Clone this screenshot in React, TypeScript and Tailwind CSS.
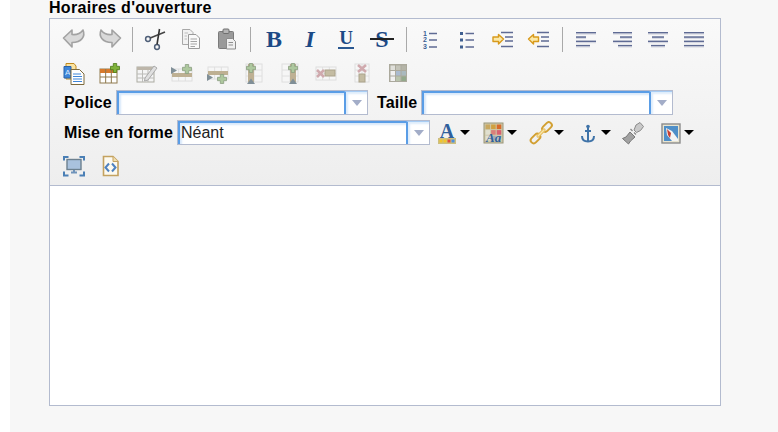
import React from "react";

const serif = { fontFamily: "'Liberation Serif', serif" };

function Svg({ children, w = 24, h = 24, className = "" }: { children: React.ReactNode; w?: number; h?: number; className?: string }) {
  return (
    <svg width={w} height={h} viewBox={`0 0 ${w} ${h}`} className={`block ${className}`}>
      {children}
    </svg>
  );
}

function Btn({ children, w = "w-9" }: { children: React.ReactNode; w?: string }) {
  return <div className={`${w} h-[34px] flex items-center justify-center shrink-0`}>{children}</div>;
}

function Sep({ w = "w-[10px]" }: { w?: string }) {
  return (
    <div className={`${w} h-[34px] flex items-center justify-center shrink-0`}>
      <div className="w-px h-[25px] bg-[#a9a9a9]" />
    </div>
  );
}

const Undo = ({ flip = false }: { flip?: boolean }) => (
  <Svg>
    <path
      transform={flip ? "matrix(-1 0 0 1 24 0)" : undefined}
      d="M1.5 11 L10 3 V7.5 C14 8 18 7 21 3 C23.5 9 20 15.5 10 15.5 V20 Z"
      fill="#d9d9d9"
      stroke="#a2a2a2"
      strokeWidth="1.6"
      strokeLinejoin="round"
    />
  </Svg>
);

const Cut = () => (
  <Svg>
    <g fill="none" stroke="#4f5f78" strokeWidth="1.5">
      <circle cx="5" cy="12" r="2.4" />
      <circle cx="14" cy="20" r="2.4" />
    </g>
    <path d="M7.2 11 L22 5" stroke="#444" strokeWidth="1.5" />
    <path d="M14 17.5 L16.5 2" stroke="#333" strokeWidth="1.6" />
  </Svg>
);

const Copy = () => (
  <Svg>
    <path d="M3.5 2.5 H11 L14 5.5 V17.5 H3.5 Z" fill="#f2f2f2" stroke="#a8a8a8" />
    <path d="M9.5 7.5 H17 L20.5 11 V21.5 H9.5 Z" fill="#fafafa" stroke="#9a9a9a" />
    <path d="M11.5 12 H18 M11.5 14.5 H18 M11.5 17 H18 M11.5 19.5 H16" stroke="#a5a5a5" />
    <path d="M5.5 6 H9 M5.5 9 H8 M5.5 12 H8" stroke="#bcbcbc" />
  </Svg>
);

const Paste = () => (
  <Svg>
    <rect x="3.5" y="4.5" width="15" height="17" rx="1" fill="#9a9a9a" stroke="#7b7b7b" />
    <rect x="8" y="2" width="6" height="4.5" rx="1" fill="#b5b5b5" stroke="#6f6f6f" />
    <path d="M11.5 11.5 H17.5 L20.5 14.5 V22 H11.5 Z" fill="#f0f0f0" stroke="#8c8c8c" />
    <path d="M13.5 15.5 H18 M13.5 18 H18" stroke="#8f8f8f" />
  </Svg>
);

function Letter({ children, italic = false, underline = false, strike = false, small = false }: { children: string; italic?: boolean; underline?: boolean; strike?: boolean; small?: boolean }) {
  return (
    <div className="relative w-6 h-6 flex items-center justify-center">
      <span
        style={serif}
        className={`text-[#1c4a86] font-bold leading-none ${italic ? "italic" : ""} ${small ? "text-[19px] -mt-[3px]" : "text-[24px]"}`}
      >
        {children}
      </span>
      {underline && <div className="absolute left-[4px] right-[4px] bottom-[2px] h-[2px] bg-[#2a5790]" />}
      {strike && <div className="absolute left-0 right-0 top-[11px] h-[2px] bg-[#222]" />}
    </div>
  );
}

const OL = () => (
  <Svg>
    <g fill="#3c5f95" fontSize="7" fontWeight="700" fontFamily="'Liberation Sans', sans-serif">
      <text x="4" y="9">1</text>
      <text x="4" y="15">2</text>
      <text x="4" y="22">3</text>
    </g>
    <path d="M10 6.5 H18 M10 13 H18 M10 20 H18" stroke="#5f6b94" strokeWidth="1.5" />
  </Svg>
);

const UL = () => (
  <Svg>
    <path d="M5 5 h3 v3 h-3 Z M5 11.5 h3 v3 h-3 Z M5 18.5 h3 v3 h-3 Z" fill="#3f5f90" />
    <path d="M10.5 6.5 H19 M10.5 13 H19 M10.5 20 H19" stroke="#5f6b94" strokeWidth="1.5" />
  </Svg>
);

const Indent = ({ out = false }: { out?: boolean }) => (
  <Svg>
    <path d="M10 5.5 H22 M14 10 H22 M14 14 H22 M10 19.5 H22" stroke="#5f6b94" strokeWidth="1.5" />
    <path
      d={out ? "M1.5 12 L6.5 7.5 V10 H11.5 V14.5 H6.5 V17 Z" : "M12.5 12 L7.5 7.5 V10 H2 V14.5 H7.5 V17 Z"}
      fill="#fbe9a8"
      stroke="#d89a1c"
      strokeWidth="1.4"
      strokeLinejoin="round"
    />
  </Svg>
);

const Align = ({ rows }: { rows: [number, number][] }) => (
  <Svg>
    {rows.map(([x, w], i) => (
      <g key={i}>
        <rect x={x} y={5 + i * 4.3} width={w} height="1.6" fill="#5f6b94" />
        <rect x={x} y={6.6 + i * 4.3} width={w} height="1" fill="#d4d6e0" />
      </g>
    ))}
  </Svg>
);

const Paste2 = () => (
  <Svg>
    <path d="M4 2.5 H12 L14 5 V18 H4 Z" fill="#fbe3a0" stroke="#c08a20" />
    <path d="M2 5.5 H9 V17 H2 Z" fill="#3f86d8" stroke="#2a62a8" />
    <text x="3" y="14" fill="#dbe9fb" fontSize="8" fontFamily="'Liberation Sans', sans-serif">A</text>
    <path d="M9 8.5 H17.5 L22 13 V23.5 H9 Z" fill="#fff" stroke="#7d6a3c" />
    <path d="M11 13 H19 M11 15.5 H20 M11 18 H20 M11 20.5 H20" stroke="#3f86d8" />
  </Svg>
);

const TableBase = ({ x = 2, y = 8, w = 17, h = 14, stroke = "#8f7a4f", head = "#d77a2c" }: { x?: number; y?: number; w?: number; h?: number; stroke?: string; head?: string }) => (
  <g>
    <rect x={x} y={y} width={w} height={h} fill="#fff" stroke={stroke} />
    <rect x={x} y={y} width={w} height={4} fill={head} />
    <path d={`M${x + w / 3} ${y} V${y + h} M${x + (2 * w) / 3} ${y} V${y + h} M${x} ${y + h / 2 + 1} H${x + w}`} stroke={stroke} />
  </g>
);

const Plus = ({ x, y, c = "#7fb23a", s = "#4c7a18" }: { x: number; y: number; c?: string; s?: string }) => (
  <path
    d={`M${x - 1.7} ${y - 4.5} h3.4 v2.8 h2.8 v3.4 h-2.8 v2.8 h-3.4 v-2.8 h-2.8 v-3.4 h2.8 Z`}
    fill={c}
    stroke={s}
    strokeWidth="0.8"
  />
);

const TableAdd = () => (
  <Svg>
    <TableBase />
    <Plus x={17} y={7} />
  </Svg>
);

const Dim = ({ children }: { children: React.ReactNode }) => <Svg className="opacity-70">{children}</Svg>;

const Grid = ({ x, y, w, h, cx = 3, cy = 2 }: { x: number; y: number; w: number; h: number; cx?: number; cy?: number }) => (
  <g>
    <rect x={x} y={y} width={w} height={h} fill="#f7f7f7" stroke="#d6d6d6" />
    {Array.from({ length: cx - 1 }).map((_, i) => (
      <path key={i} d={`M${x + ((i + 1) * w) / cx} ${y} V${y + h}`} stroke="#d6d6d6" />
    ))}
    {Array.from({ length: cy - 1 }).map((_, i) => (
      <path key={i} d={`M${x} ${y + ((i + 1) * h) / cy} H${x + w}`} stroke="#d6d6d6" />
    ))}
  </g>
);

const TEdit = () => (
  <Dim>
    <rect x="3" y="6" width="17" height="15" fill="#f5f5f5" stroke="#8d8d80" />
    <rect x="3" y="6" width="17" height="3" fill="#a59c8a" />
    <path d="M8.5 9 V21 M14 9 V21 M3 13 H20 M3 17 H20" stroke="#a5a5a0" />
    <path d="M11 17 L20 5 L23 7 L14 19 L10.5 20 Z" fill="#d8d8d8" stroke="#8a8a8a" />
  </Dim>
);

const ColBefore = () => (
  <Dim>
    <Grid x={2} y={8} w={20} h={12} />
    <rect x="2" y="12" width="20" height="4" fill="#a8946a" />
    <path d="M1 6 L7 9.5 L1 13 Z" fill="#4f6470" />
    <Plus x={17} y={8} c="#8fb57a" s="#5f7a50" />
  </Dim>
);

const ColAfter = () => (
  <Dim>
    <Grid x={2} y={6} w={20} h={12} />
    <rect x="2" y="10" width="20" height="4" fill="#a8946a" />
    <path d="M1 13 L7 16.5 L1 20 Z" fill="#4f6470" />
    <Plus x={16} y={18} c="#8fb57a" s="#5f7a50" />
  </Dim>
);

const RowAdd = ({ shift = 0 }: { shift?: number }) => (
  <Dim>
    <Grid x={4} y={3} w={16} h={18} cx={2} cy={3} />
    <rect x={6 + shift} y="3" width="6" height="18" fill="#a8946a" />
    <Plus x={9 + shift} y={7} c="#8fb57a" s="#5f7a50" />
    <path d={`M${5 + shift} 23 L${9 + shift} 17.5 L${13 + shift} 23 Z`} fill="#4f6470" />
  </Dim>
);

const DelRow = () => (
  <Dim>
    <Grid x={2} y={6} w={20} h={13} cx={3} cy={2} />
    <rect x="11" y="9" width="10" height="6" fill="#b0a480" stroke="#8d8160" />
    <path d="M3 9 L10 16 M10 9 L3 16" stroke="#c08a90" strokeWidth="2.6" />
  </Dim>
);

const DelCol = () => (
  <Dim>
    <Grid x={5} y={3} w={14} h={18} cx={2} cy={3} />
    <rect x="9" y="13" width="6" height="8" fill="#b0a480" stroke="#8d8160" />
    <path d="M8 4 L16 11 M16 4 L8 11" stroke="#c08a90" strokeWidth="2.6" />
  </Dim>
);

const Cells = () => (
  <Dim>
    <rect x="3" y="3" width="18" height="18" fill="#8d8a78" />
    {["#d8d8d0", "#b0b0a0", "#9a9a88", "#f0f0f0", "#8ba3c0", "#8aa0a8", "#f0f0f0", "#a0b090", "#6a8a60"].map((c, i) => (
      <rect key={i} x={4.5 + (i % 3) * 5.5} y={4.5 + Math.floor(i / 3) * 5.5} width="4.5" height="4.5" fill={c} />
    ))}
  </Dim>
);

function Combo({ value = "", w }: { value?: string; w: string }) {
  return (
    <div className={`${w} h-[25px] border border-[#b3bbcf] flex bg-white shrink-0`}>
      <div className="flex-1 min-w-0 border-l-2 border-t-2 border-l-[#5a9de6] border-t-[#5a9de6] shadow-[inset_2px_2px_2px_#d8e8fa] text-[16px] leading-[19px] text-[#222] pl-[1px] font-['Liberation_Sans',sans-serif] overflow-hidden">
        {value}
      </div>
      <div className="w-[23px] shrink-0 border-l-2 border-t border-l-[#5a9de6] border-t-[#a8cdf4] shadow-[inset_2px_2px_2px_#deecfb] flex items-center justify-center">
        <div className="w-0 h-0 border-l-[5px] border-r-[5px] border-t-[6px] border-l-transparent border-r-transparent border-t-[#a3adc8]" />
      </div>
    </div>
  );
}

const Caret = () => <div className="w-0 h-0 border-l-[5px] border-r-[5px] border-t-[5px] border-l-transparent border-r-transparent border-t-black" />;

const TextColor = () => (
  <Svg>
    <text x="12" y="17" textAnchor="middle" fill="#2f5f9c" fontSize="20" fontWeight="700" fontFamily="'Liberation Serif', serif">A</text>
    <rect x="3" y="17" width="18" height="6" fill="#cdbf80" />
    <rect x="4.5" y="18.5" width="3" height="3" fill="#f3c52a" />
    <rect x="8.5" y="18.5" width="3" height="3" fill="#f3c52a" />
    <rect x="12.5" y="18.5" width="3" height="3" fill="#e0503a" />
    <rect x="16.5" y="18.5" width="3" height="3" fill="#4c8fe0" />
  </Svg>
);

const BgColor = () => (
  <Svg>
    <rect x="2" y="2" width="19" height="20" fill="#cfc9aa" stroke="#9a9578" />
    {["#c9a860", "#d0a040", "#d86a2a", "#e0e0d0", "#d8807a", "#d86070", "#e0e0d0", "#a0a8b8", "#c0c0c0"].map((c, i) => (
      <rect key={i} x={3.5 + (i % 3) * 5.6} y={3.5 + Math.floor(i / 3) * 5.6} width="4.6" height="4.6" fill={c} />
    ))}
    <text x="4" y="21" fill="#2f5f9c" fontSize="13" fontWeight="700" fontStyle="italic" fontFamily="'Liberation Serif', serif">Aa</text>
  </Svg>
);

const LinkIcon = () => (
  <Svg>
    <g fill="none" stroke="#d2a032" strokeWidth="2">
      <rect x="-3" y="-5.5" width="6" height="11" rx="3" transform="translate(6.5,17.5) rotate(45)" />
      <rect x="-3" y="-5.5" width="6" height="11" rx="3" transform="translate(18,6) rotate(45)" />
    </g>
    <path d="M9 15 L15 9" stroke="#e6bc5a" strokeWidth="3.2" strokeLinecap="round" />
    <path d="M9 15 L15 9" stroke="#f8e6a8" strokeWidth="1.2" strokeLinecap="round" />
  </Svg>
);

const Anchor = () => (
  <Svg>
    <g fill="none" stroke="#3f73a8" strokeWidth="2">
      <path d="M12 7 V20" />
      <path d="M9 10 H15" />
      <path d="M6 15 C6 19 9 20.5 12 20.5 C15 20.5 18 19 18 15" />
    </g>
    <circle cx="12" cy="5.5" r="1.8" fill="#3f73a8" />
  </Svg>
);

const Unlink = () => (
  <Svg>
    <path d="M1.5 17.5 L5 16 L9 11 L14 16 L9.5 20 L7.5 23 Z" fill="#a2a2a2" stroke="#777" />
    <path d="M13 9 L15 4 L19 1.5 L22.5 5.5 L19.5 9.5 L15.5 11.5 Z" fill="#c9c9c9" stroke="#8a8a8a" />
    <path d="M9.5 8 L11.5 10 M13 11.5 L15 13.5" stroke="#8a8a8a" strokeWidth="1.3" />
  </Svg>
);

const ImageIcon = () => (
  <Svg>
    <rect x="3" y="3" width="18" height="19" fill="#e8e4d0" stroke="#8c8c8c" strokeWidth="1.4" />
    <rect x="5" y="5" width="14" height="15" fill="#4f8fc8" />
    <path d="M7 7 L13 10 L19 18 V20 H13 L8 14 Z" fill="#f4f4f4" />
    <path d="M8 8 L12 12 L11 17 L9 14 Z" fill="#c84032" />
  </Svg>
);

const Fullscreen = () => (
  <Svg>
    <path d="M2 6.5 V3 H6.5 M17.5 3 H22 V6.5 M22 17.5 V21.5 H17.5 M6.5 21.5 H2 V17.5" fill="none" stroke="#4a7fb5" strokeWidth="2" />
    <rect x="5" y="5.5" width="14" height="10" fill="#a9c2de" stroke="#6d8190" strokeWidth="1.4" />
    <path d="M9 18.5 H15 M12 16 V18.5" stroke="#6f93ba" strokeWidth="2" />
  </Svg>
);

const Source = () => (
  <Svg>
    <path d="M5.5 2.5 H15 L20 7.5 V21.5 H5.5 Z" fill="#fdfaf0" stroke="#c4a260" strokeWidth="1.6" />
    <path d="M15 2.5 V7.5 H20" fill="#f2dfb0" stroke="#c4a260" />
    <path d="M11 9.5 L7.5 13.5 L11 17.5 M14 9.5 L17.5 13.5 L14 17.5" fill="none" stroke="#4f82c0" strokeWidth="2" />
  </Svg>
);

const Label = ({ children, className = "" }: { children: string; className?: string }) => (
  <span className={`text-[16px] font-bold tracking-[0.1px] text-black whitespace-nowrap shrink-0 ${className}`}>{children}</span>
);

export default function App() {
  return (
    <div className="w-[778px] h-[432px] overflow-hidden bg-white pl-[10px] font-['Liberation_Sans',Arial,sans-serif]">
      <div className="h-full bg-[#f7f7f7] pl-[39px]">
        <div className="h-[18px] leading-[16px] text-[16px] font-bold tracking-[0.3px] text-black whitespace-nowrap">Horaires d'ouverture</div>
        <div className="w-[672px] h-[388px] border border-[#b3bbcf] flex flex-col bg-white">
          <div className="h-[167px] shrink-0 border-b border-[#b3bbcf] bg-gradient-to-b from-[#f9f9f9] to-[#eeeeee] pl-[6px] pt-[3px]">
            <div className="flex">
              <Btn><Undo /></Btn>
              <Btn><Undo flip /></Btn>
              <Sep w="w-[9px]" />
              <Btn><Cut /></Btn>
              <Btn><Copy /></Btn>
              <Btn><Paste /></Btn>
              <Sep w="w-[11px]" />
              <Btn><Letter>B</Letter></Btn>
              <Btn><Letter italic>I</Letter></Btn>
              <Btn><Letter underline small>U</Letter></Btn>
              <Btn><Letter strike>S</Letter></Btn>
              <Sep w="w-[13px]" />
              <Btn><OL /></Btn>
              <Btn><UL /></Btn>
              <Btn><Indent /></Btn>
              <Btn><Indent out /></Btn>
              <Sep w="w-[11px]" />
              <Btn><Align rows={[[2, 20], [2, 10], [2, 20], [2, 14]]} /></Btn>
              <Btn><Align rows={[[3, 19], [10, 12], [3, 19], [8, 14]]} /></Btn>
              <Btn><Align rows={[[2, 20], [6, 12], [2, 20], [5, 14]]} /></Btn>
              <Btn><Align rows={[[2, 20], [2, 20], [2, 20], [2, 20]]} /></Btn>
            </div>
            <div className="flex">
              <Btn><Paste2 /></Btn>
              <Btn><TableAdd /></Btn>
              <Btn><TEdit /></Btn>
              <Btn><ColBefore /></Btn>
              <Btn><ColAfter /></Btn>
              <Btn><RowAdd /></Btn>
              <Btn><RowAdd shift={6} /></Btn>
              <Btn><DelRow /></Btn>
              <Btn><DelCol /></Btn>
              <Btn><Cells /></Btn>
            </div>
            <div className="flex items-center h-[25px]">
              <Label className="ml-2 w-[52px]">Police</Label>
              <Combo w="w-[252px]" />
              <Label className="ml-[9px] w-[44px]">Taille</Label>
              <Combo w="w-[252px]" />
            </div>
            <div className="flex items-center h-[25px] mt-[5px]">
              <Label className="ml-2 w-[113px]">Mise en forme</Label>
              <Combo w="w-[253px]" value="Néant" />
              <div className="flex items-center ml-[3px]">
                <Btn w="w-[27px]"><TextColor /></Btn>
                <div className="w-5"><Caret /></div>
                <Btn w="w-[27px]"><BgColor /></Btn>
                <div className="w-5"><Caret /></div>
                <Btn w="w-[27px]"><LinkIcon /></Btn>
                <div className="w-5"><Caret /></div>
                <Btn w="w-[27px]"><Anchor /></Btn>
                <div className="w-[14px]"><Caret /></div>
                <Btn><Unlink /></Btn>
                <Btn w="w-[27px] ml-[6px]"><ImageIcon /></Btn>
                <Caret />
              </div>
            </div>
            <div className="flex mt-[4px]">
              <Btn><Fullscreen /></Btn>
              <Btn><Source /></Btn>
            </div>
          </div>
          <div className="flex-1 bg-white" />
        </div>
      </div>
    </div>
  );
}
